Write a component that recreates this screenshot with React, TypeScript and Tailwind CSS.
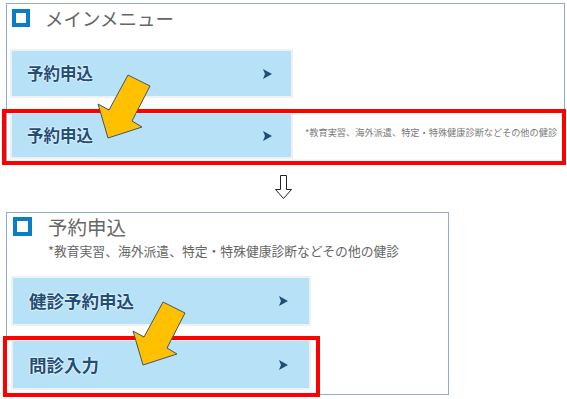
import React from "react";

const font = { fontFamily: '"Noto Sans CJK JP", "Noto Sans", sans-serif' };

function Tri() {
  return (
    <svg width="9" height="10" viewBox="0 0 9 10" className="shrink-0">
      <polygon points="0,0 9,5 0,10 2,5" fill="#1f4e79" />
    </svg>
  );
}

function Btn({ label, w, h, size, pl, pr }: { label: string; w: string; h: string; size: string; pl: string; pr: string }) {
  return (
    <div
      className={`flex items-center justify-between bg-[#b7e1f6] shadow-[0_0_0_2px_#eef2f5] ${w} ${h} ${pl} ${pr}`}
    >
      <span
        className={`${size} font-bold text-[#1f4e79] leading-none [text-shadow:0_0_2px_#fff,0_0_2px_#fff]`}
      >
        {label}
      </span>
      <Tri />
    </div>
  );
}

export default function App() {
  return (
    <div className="relative w-[567px] h-[399px] bg-white overflow-hidden" style={font}>
      <div className="flex flex-col">
        {/* Top panel */}
        <div className="ml-[6px] mt-[3px] w-[559px] h-[161px] border border-[#8eaadc] flex flex-col pl-[5px] pt-[5px]">
          <div className="flex items-center h-[18px]">
            <div className="w-[18px] h-[18px] border-[4px] border-[#0b7dc5]" />
            <span className="ml-[15px] text-[18.5px] leading-none text-[#666666]">メインメニュー</span>
          </div>
          <div className="mt-[24px]">
            <Btn label="予約申込" w="w-[279px]" h="h-[45px]" size="text-[16.5px]" pl="pl-[15px]" pr="pr-[19px]" />
          </div>
          <div className="mt-[18px] flex items-center">
            <Btn label="予約申込" w="w-[279px]" h="h-[43px]" size="text-[16.5px]" pl="pl-[15px]" pr="pr-[19px]" />
            <span className="ml-[14px] -mt-[5px] text-[9.2px] leading-none text-[#7a7a7a] whitespace-nowrap">
              *教育実習、海外派遣、特定・特殊健康診断などその他の健診
            </span>
          </div>
        </div>

        {/* Down arrow */}
        <div className="h-[48px] pl-[274px] pt-[9px]">
          <svg width="20" height="27" viewBox="274 172 20 27">
            <polygon
              points="280.5,174.5 286.5,174.5 286.5,188.5 291.5,188.5 283.5,197.5 275.5,188.5 280.5,188.5"
              fill="#fff"
              stroke="#222"
              strokeWidth="1"
            />
          </svg>
        </div>

        {/* Second panel */}
        <div className="ml-[6px] w-[443px] h-[183px] border border-[#8eaadc] flex flex-col pl-[6px] pt-[4px]">
          <div className="flex items-center h-[19px]">
            <div className="w-[19px] h-[19px] border-[4px] border-[#0b7dc5]" />
            <span className="ml-[16px] text-[19.5px] leading-none text-[#666666]">予約申込</span>
          </div>
          <div className="ml-[35px] mt-[7px] text-[12.8px] leading-[16px] text-[#666666] whitespace-nowrap">
            *教育実習、海外派遣、特定・特殊健康診断などその他の健診
          </div>
          <div className="mt-[19px]">
            <Btn label="健診予約申込" w="w-[296px]" h="h-[46px]" size="text-[17.5px]" pl="pl-[16px]" pr="pr-[21px]" />
          </div>
          <div className="mt-[17px]">
            <Btn label="問診入力" w="w-[296px]" h="h-[47px]" size="text-[17.5px]" pl="pl-[16px]" pr="pr-[21px]" />
          </div>
        </div>
      </div>

      {/* Annotation overlays */}
      <div className="absolute left-[2px] top-[109px] w-[564px] h-[56px] border-[4px] border-[#ff0000]" />
      <div className="absolute left-[3px] top-[336px] w-[317px] h-[61px] border-[4px] border-[#ff0000]" />
      <svg className="absolute inset-0 pointer-events-none" width="567" height="399">
        <polygon
          points="128,75 150,86 132,121 142,127 108,138 98,104 109,110"
          fill="#ffc000"
          stroke="#44546a"
          strokeWidth="1"
          strokeLinejoin="miter"
        />
        <polygon
          points="163,302 185,313 167,348 177,354 143,365 133,331 144,337"
          fill="#ffc000"
          stroke="#44546a"
          strokeWidth="1"
          strokeLinejoin="miter"
        />
      </svg>
    </div>
  );
}
